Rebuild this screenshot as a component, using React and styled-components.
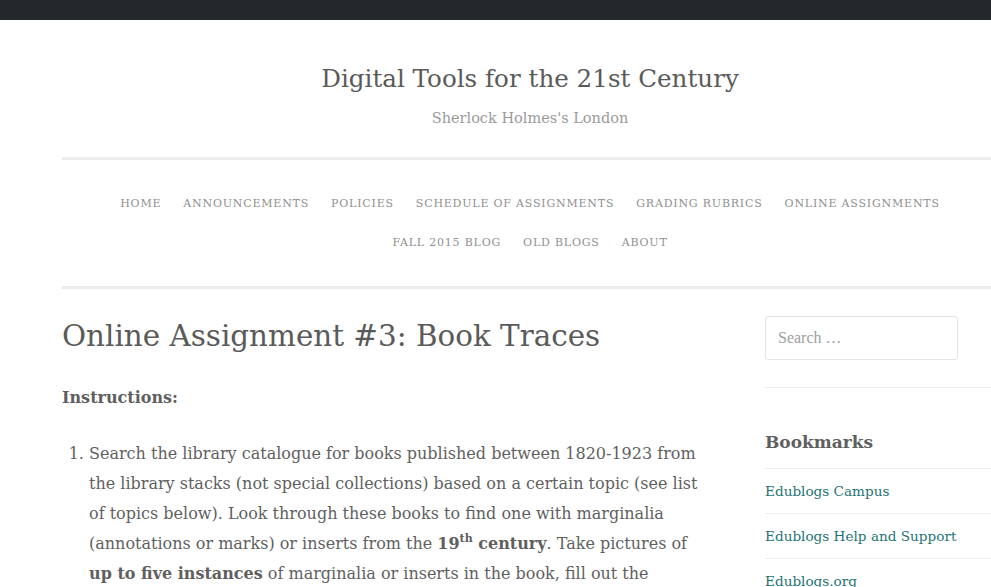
import React from "react";
import styled, { createGlobalStyle } from "styled-components";

const SLAB = `"DejaVu Serif", "Liberation Serif", serif`;

const Global = createGlobalStyle`
  html, body { margin: 0; padding: 0; background: #fff; overflow: hidden; }
  body { font-family: ${SLAB}; color: #5f5f5f; }
`;

const AdminBar = styled.div`
  height: 20px;
  background: #23282d;
`;

const Container = styled.div`
  width: 936px;
  margin-left: 62px;
`;

const Branding = styled.header`
  text-align: center;
  padding: 41px 0 27px;
  border-bottom: 3px solid #ececec;
`;

const SiteTitle = styled.h1`
  margin: 0;
  font-size: 24.6px;
  font-weight: 400;
  line-height: 36px;
  color: #5a5a5a;
`;

const Tagline = styled.p`
  margin: 9px 0 0;
  font-size: 14.5px;
  line-height: 24px;
  color: #9a9a9a;
`;

const Nav = styled.nav`
  padding: 24px 0 24px;
  border-bottom: 3px solid #ececec;
`;

const NavRow = styled.ul`
  list-style: none;
  margin: 0;
  padding: 0;
  display: flex;
  justify-content: center;
  flex-wrap: wrap;
  column-gap: 22px;
  height: 39px;
  align-items: center;
`;

const NavItem = styled.li`
  font-size: 11px;
  letter-spacing: 0.8px;
  text-transform: uppercase;
  color: #8f8f8f;
`;

const Body = styled.div`
  display: flex;
  gap: 55px;
  padding-top: 27px;
`;

const Main = styled.main`
  width: 648px;
  flex-shrink: 0;
`;

const EntryTitle = styled.h2`
  margin: 0;
  font-size: 29.4px;
  font-weight: 400;
  line-height: 40px;
  color: #5a5a5a;
`;

const Para = styled.p`
  margin: 27px 0 0;
  font-size: 16px;
  line-height: 30px;
  font-weight: 700;
`;

const List = styled.ol`
  margin: 26px 0 0;
  padding-left: 27px;
  font-size: 16px;
  line-height: 30px;
  font-weight: 400;
`;

const Item = styled.li``;

const Strong = styled.strong`
  font-weight: 700;
`;

const Sup = styled.sup`
  font-size: 11px;
  line-height: 0;
  vertical-align: 7px;
`;

const NoWrap = styled.span`
  white-space: nowrap;
`;

const Sidebar = styled.aside`
  flex: 1;
`;

const SearchBox = styled.div`
  width: 193px;
  height: 44px;
  box-sizing: border-box;
  border: 1px solid #e4e4e4;
  border-radius: 3px;
  display: flex;
  align-items: center;
  padding-left: 12px;
  font-family: "Liberation Serif", serif;
  font-size: 16px;
  color: #a0a0a0;
`;

const Widget = styled.section`
  margin-top: 27px;
  border-top: 1px solid #ececec;
  padding-top: 41px;
`;

const WidgetTitle = styled.h3`
  margin: 0 0 13px;
  font-size: 17px;
  font-weight: 700;
  line-height: 26px;
  color: #5f5f5f;
`;

const LinkList = styled.ul`
  list-style: none;
  margin: 0;
  padding: 0;
`;

const LinkItem = styled.li`
  border-top: 1px solid #ececec;
  height: 44px;
  display: flex;
  align-items: center;
  font-size: 13.6px;
  color: #1e7474;
`;

const nav1 = ["Home", "Announcements", "Policies", "Schedule of Assignments", "Grading Rubrics", "Online Assignments"];
const nav2 = ["Fall 2015 Blog", "Old Blogs", "About"];

export default function App() {
  return (
    <>
      <Global />
      <AdminBar />
      <Container>
        <Branding>
          <SiteTitle>Digital Tools for the 21st Century</SiteTitle>
          <Tagline>Sherlock Holmes's London</Tagline>
        </Branding>
        <Nav>
          <NavRow>{nav1.map((n) => <NavItem key={n}>{n}</NavItem>)}</NavRow>
          <NavRow>{nav2.map((n) => <NavItem key={n}>{n}</NavItem>)}</NavRow>
        </Nav>
        <Body>
          <Main>
            <EntryTitle>Online Assignment #3: Book Traces</EntryTitle>
            <Para>Instructions:</Para>
            <List>
              <Item>
                Search the library catalogue for books published between 1820-1923 from the library stacks (not special collections) based on a certain topic (see list of topics below). Look through these books to find one with marginalia (annotations or marks) or inserts from the <Strong>19<Sup>th</Sup> century</Strong>. Take pictures of <Strong>up to five instances</Strong> of marginalia or inserts in the book, fill out the <NoWrap>form on the Book Traces</NoWrap> website, and upload your pictures.
              </Item>
            </List>
          </Main>
          <Sidebar>
            <SearchBox>Search …</SearchBox>
            <Widget>
              <WidgetTitle>Bookmarks</WidgetTitle>
              <LinkList>
                <LinkItem>Edublogs Campus</LinkItem>
                <LinkItem>Edublogs Help and Support</LinkItem>
                <LinkItem>Edublogs.org</LinkItem>
              </LinkList>
            </Widget>
          </Sidebar>
        </Body>
      </Container>
    </>
  );
}
